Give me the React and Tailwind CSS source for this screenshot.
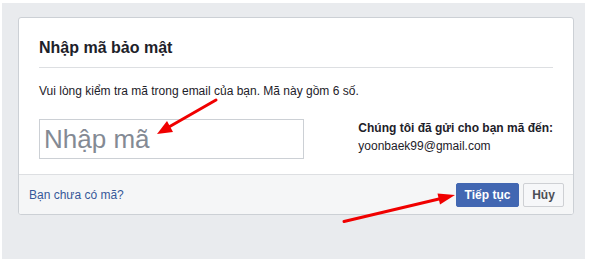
export default function App() {
  return (
    <div
      className="relative w-[589px] h-[261px] bg-white pt-[3px] pl-[2px]"
      style={{ fontFamily: '"Liberation Sans", Arial, sans-serif' }}
    >
      <div className="w-[583px] h-[256px] bg-[#e9ebee] pt-[14px] pl-[16px]">
        <div className="w-[556px] bg-white border border-[#ccd0d5] rounded-[3px] overflow-hidden">
          <div className="px-[20px] pt-[20px]">
            <div className="text-[16px] leading-[20px] font-bold text-[#1d2129] pb-[9px] border-b border-[#dddfe2]">
              Nhập mã bảo mật
            </div>
          </div>
          <div className="px-[20px] pt-[15px] pb-[15px]">
            <div className="text-[12px] leading-[16px] text-[#1d2129]">
              Vui lòng kiểm tra mã trong email của bạn. Mã này gồm 6 số.
            </div>
            <div className="mt-[20px] flex">
              <div className="w-[266px] h-[40px] border border-[#ccd0d5] flex items-center pl-[4px]">
                <span className="text-[26px] leading-[30px] text-[#848a94]">Nhập mã</span>
              </div>
              <div className="ml-[54px] text-[12px] leading-[18px] text-[#1d2129] whitespace-nowrap">
                <div className="font-bold">Chúng tôi đã gửi cho bạn mã đến:</div>
                <div>yoonbaek99@gmail.com</div>
              </div>
            </div>
          </div>
          <div className="border-t border-[#dddfe2] bg-[#f5f6f7] pl-[10px] pr-[9px] pt-[8px] pb-[7px] flex items-center justify-between">
            <span className="text-[12px] leading-[16px] text-[#365899]">Bạn chưa có mã?</span>
            <div className="flex gap-[4px]">
              <div className="h-[24px] w-[63px] flex items-center justify-center rounded-[2px] bg-[#4267b2] border border-[#4267b2] text-white text-[12px] font-bold">
                Tiếp tục
              </div>
              <div className="h-[24px] w-[41px] flex items-center justify-center rounded-[2px] bg-[#f6f7f9] border border-[#ced0d4] text-[#4b4f56] text-[12px] font-bold">
                Hủy
              </div>
            </div>
          </div>
        </div>
      </div>
      <svg className="absolute left-0 top-0 pointer-events-none" width="589" height="261" viewBox="0 0 589 261">
        <line x1="216" y1="100" x2="168" y2="127.5" stroke="#f00000" strokeWidth="3" strokeLinecap="round" />
        <polygon points="157,134 173,132 167,121" fill="#f00000" />
        <line x1="344" y1="221.5" x2="441" y2="198.5" stroke="#f00000" strokeWidth="3" strokeLinecap="round" />
        <polygon points="455,195 440,204.5 437.5,193.5" fill="#f00000" />
      </svg>
    </div>
  );
}
